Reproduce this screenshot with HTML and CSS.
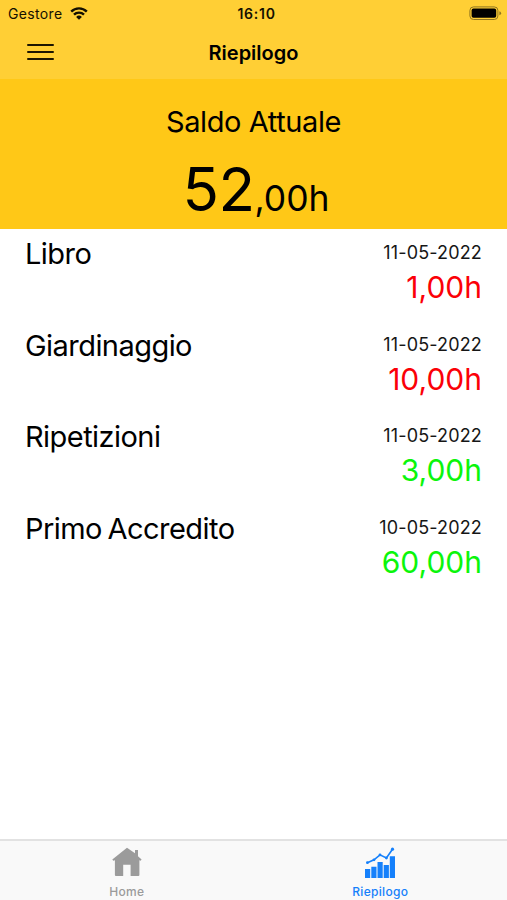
FILE: index.html
```html
<!DOCTYPE html>
<html lang="it">
	<head>
		<meta charset="utf-8">
		<meta name="viewport" content="width=device-width, initial-scale=1.0">
		<title>Riepilogo</title>
		<link rel="stylesheet" href="styles.css">
	</head>

	<body>
		<header>
			<div class="status">
				<div class="carrier">
					<span>Gestore</span>
					<svg width="18" height="14" viewBox="0 0 18 14" fill="none" stroke="#141000" stroke-width="2.4">
						<path d="M1.2 4.6a11 11 0 0 1 15.6 0"/>
						<path d="M4 7.7a7 7 0 0 1 10 0"/>
						<path d="M9 12.8L6.1 9.9a4.1 4.1 0 0 1 5.8 0z" fill="#141000" stroke="none"/>
					</svg>
				</div>
				<span class="clock">16:10</span>
				<svg class="battery" width="33" height="15" viewBox="0 0 33 15">
					<rect x=".9" y=".9" width="28" height="12.6" rx="3.6" fill="none" stroke="#8f7520"/>
					<rect x="2.6" y="2.6" width="24.6" height="9.2" rx="1.8"/>
					<path d="M30.4 5.2q1.7.7 1.7 2t-1.7 2z" fill="#8f7520"/>
				</svg>
			</div>
			<nav class="navbar">
				<button class="menu"><i></i><i></i><i></i></button>
				<h1>Riepilogo</h1>
			</nav>
		</header>

		<section class="balance">
			<h2>Saldo Attuale</h2>
			<p><span class="units">52</span><span class="cents">,00h</span></p>
		</section>

		<main>
			<article>
				<h3>Libro</h3>
				<div class="detail"><time>11-05-2022</time><p class="out">1,00h</p></div>
			</article>
			<article>
				<h3>Giardinaggio</h3>
				<div class="detail"><time>11-05-2022</time><p class="out">10,00h</p></div>
			</article>
			<article>
				<h3>Ripetizioni</h3>
				<div class="detail"><time>11-05-2022</time><p class="in">3,00h</p></div>
			</article>
			<article>
				<h3>Primo Accredito</h3>
				<div class="detail"><time>10-05-2022</time><p class="in">60,00h</p></div>
			</article>
		</main>

		<footer>
			<a class="tab">
				<svg width="32" height="32" viewBox="0 0 32 32" fill="currentColor">
					<path d="M16 1.8L1.3 13.5l1 1.3 1.6-.6V29q0 1 1 1h7.3V18.7h7.4V30h7.8q1 0 1-1V14.2l1.2.6 1-1.3-3.6-3.2V4.1h-3v3.2z"/>
				</svg>
				<span>Home</span>
			</a>
			<a class="tab active">
				<svg width="32" height="32" viewBox="0 0 32 32" fill="currentColor">
					<path d="M1 23h5.2v9H1zM7.3 20.7h5.2V32H7.3zM13.5 16h5.2v16h-5.2zM19.7 19h5.2v13h-5.2zM25.8 10.3H31V32h-5.2z"/>
					<path d="M3.4 16.7l6.6-2.9 6-4.9 6.4 3.1 6.1-8.8" fill="none" stroke="currentColor" stroke-width="1.6"/>
					<circle cx="3.4" cy="16.7" r="1.4"/>
					<circle cx="10" cy="13.8" r="1.4"/>
					<circle cx="16" cy="8.9" r="1.4"/>
					<circle cx="22.4" cy="12" r="1.4"/>
					<circle cx="28.5" cy="3.2" r="1.6"/>
				</svg>
				<span>Riepilogo</span>
			</a>
		</footer>
	</body>
</html>
```

FILE: styles.css
```css
*{
	box-sizing: border-box;
}
body{
	margin: 0;
	height: 100vh;
	display: flex;
	flex-direction: column;
	font-family: Inter, "Liberation Sans", sans-serif;
	color: #000;
	background-color: white;
}
h1, h2, h3, p{
	margin: 0;
	font-weight: 400;
}
svg{
	display: block;
}
header{
	height: 79px;
	background-color: #ffcf35;
}
.status{
	display: grid;
	grid-template-columns: 1fr auto 1fr;
	align-items: center;
	height: 27px;
	padding: 0 5px 0 8px;
	color: #141000;
}
.carrier{
	display: flex;
	align-items: center;
	gap: 7px;
	font-size: 14px;
	letter-spacing: .35px;
}
.clock{
	font-size: 14px;
	font-weight: 600;
	letter-spacing: .75px;
	padding-left: 3px;
}
.battery{
	justify-self: end;
}
.navbar{
	display: grid;
	grid-template-columns: 1fr auto 1fr;
	align-items: center;
	height: 50px;
	padding: 0 27px;
}
.menu{
	display: flex;
	flex-direction: column;
	gap: 5px;
	width: 27px;
	padding: 0;
	border: 0;
	background: none;
}
.menu i{
	height: 2px;
	width: 27px;
	border-radius: 1px;
	background-color: #1c1600;
}
.navbar h1{
	font-size: 20px;
	font-weight: 600;
	line-height: 24px;
	padding-top: 1px;
}
.balance{
	height: 150px;
	padding-top: 25px;
	background-color: #ffc817;
	text-align: center;
}
.balance h2{
	font-size: 29px;
	line-height: 36px;
	letter-spacing: -.4px;
}
.balance p{
	line-height: 70px;
	padding: 14px 0 0 5px;
}
.units{
	font-size: 60px;
	letter-spacing: -.5px;
}
.cents{
	font-size: 35.5px;
}
main{
	flex: 1;
	padding: 7px 25px 0;
}
article{
	display: flex;
	justify-content: space-between;
	height: 91.6px;
}
article h3{
	font-size: 29px;
	line-height: 36px;
	letter-spacing: -.55px;
	word-spacing: -2px;
}
.detail{
	padding-top: 6px;
	text-align: right;
}
time{
	display: block;
	font-size: 18px;
	line-height: 22px;
	letter-spacing: .15px;
	color: #161616;
}
.detail p{
	font-size: 30px;
	line-height: 46px;
}
.out{
	color: #fb0007;
}
.in{
	color: #0bf50b;
}
footer{
	display: grid;
	grid-template-columns: 1fr 1fr;
	height: 61px;
	border-top: 2px solid #e2e2e2;
	background-color: #f9f9f9;
}
.tab{
	display: flex;
	flex-direction: column;
	align-items: center;
	padding-top: 5px;
	font-size: 12px;
	font-weight: 500;
	letter-spacing: .3px;
	color: #9b9b9b;
}
.tab span{
	line-height: 16px;
	padding-top: 6px;
}
.active{
	color: #1580fb;
}
```
